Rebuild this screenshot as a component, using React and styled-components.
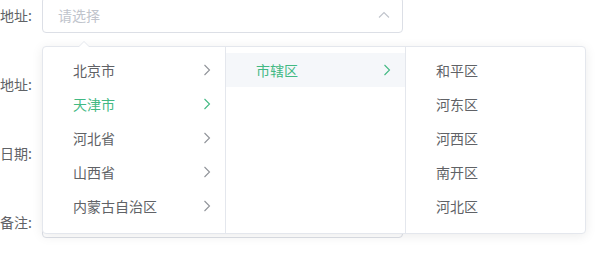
import React from 'react';
import styled, { createGlobalStyle } from 'styled-components';

const GlobalStyle = createGlobalStyle`
  html, body {
    margin: 0;
    padding: 0;
    background: #fff;
    overflow: hidden;
  }
  body {
    font-family: "Noto Sans CJK SC", "Liberation Sans", sans-serif;
    font-size: 14px;
    color: #606266;
  }
`;

const Page = styled.div`
  position: relative;
  width: 606px;
  height: 257px;
  overflow: hidden;
`;

const Form = styled.div`
  display: flex;
  flex-direction: column;
  gap: 33px;
  margin-top: -3px;
`;

const Row = styled.div`
  display: flex;
  align-items: flex-start;
`;

const Label = styled.div`
  width: 42px;
  flex: none;
  height: 36px;
  padding-right: 10px;
  box-sizing: border-box;
  display: flex;
  align-items: center;
  justify-content: flex-end;
  white-space: nowrap;
  color: #606266;
`;

const Field = styled.div`
  width: 361px;
  height: ${p => p.$h || 36}px;
  box-sizing: border-box;
  border: 1px solid ${p => (p.$active ? '#dcdfe6' : '#dcdfe6')};
  border-radius: 4px;
  display: flex;
  align-items: center;
  justify-content: space-between;
  padding: 0 12px 0 15px;
  background: #fff;
`;

const Placeholder = styled.span`
  color: #c0c4cc;
`;

const Popover = styled.div`
  position: absolute;
  left: 42px;
  top: 46px;
  display: flex;
  background: #fff;
  border: 1px solid #e4e7ed;
  border-radius: 4px;
  box-shadow: 0 2px 12px rgba(0, 0, 0, 0.08);

  &::before {
    content: '';
    position: absolute;
    top: -6px;
    left: 35px;
    border: 6px solid transparent;
    border-top-width: 0;
    border-bottom-color: #e4e7ed;
  }
  &::after {
    content: '';
    position: absolute;
    top: -5px;
    left: 35px;
    border: 6px solid transparent;
    border-top-width: 0;
    border-bottom-color: #fff;
  }
`;

const Menu = styled.ul`
  list-style: none;
  margin: 0;
  padding: 6px 0;
  width: ${p => p.$w}px;
  height: 186px;
  box-sizing: border-box;
  border-right: ${p => (p.$last ? 'none' : '1px solid #e4e7ed')};
`;

const Item = styled.li`
  height: 34px;
  display: flex;
  align-items: center;
  justify-content: space-between;
  padding: 0 14px 0 30px;
  color: ${p => (p.$active ? '#42b983' : '#606266')};
  background: ${p => (p.$hover ? '#f5f7fa' : 'transparent')};
`;

const Chevron = ({ color = '#909399', dir = 'right' }) => (
  <svg width="8" height="12" viewBox="0 0 8 12">
    {dir === 'right' ? (
      <polyline points="1.5,1 6.5,6 1.5,11" fill="none" stroke={color} strokeWidth="1.1" />
    ) : (
      <polyline points="1,6 6,1 11,6" fill="none" stroke={color} strokeWidth="1.1" />
    )}
  </svg>
);

const UpArrow = () => (
  <svg width="12" height="8" viewBox="0 0 12 8">
    <polyline points="1,6.5 6,1.5 11,6.5" fill="none" stroke="#c0c4cc" strokeWidth="1.1" />
  </svg>
);

const provinces = ['北京市', '天津市', '河北省', '山西省', '内蒙古自治区'];
const districts = ['和平区', '河东区', '河西区', '南开区', '河北区'];

export default function App() {
  return (
    <Page>
      <GlobalStyle />
      <Form>
        <Row>
          <Label>地址:</Label>
          <Field>
            <Placeholder>请选择</Placeholder>
            <UpArrow />
          </Field>
        </Row>
        <Row>
          <Label>地址:</Label>
          <Field />
        </Row>
        <Row>
          <Label>日期:</Label>
          <Field />
        </Row>
        <Row>
          <Label>备注:</Label>
          <Field $h={34} />
        </Row>
      </Form>

      <Popover>
        <Menu $w={183}>
          {provinces.map(name => (
            <Item key={name} $active={name === '天津市'}>
              <span>{name}</span>
              <Chevron color={name === '天津市' ? '#42b983' : '#909399'} />
            </Item>
          ))}
        </Menu>
        <Menu $w={180}>
          <Item $active $hover>
            <span>市辖区</span>
            <Chevron color="#42b983" />
          </Item>
        </Menu>
        <Menu $w={179} $last>
          {districts.map(name => (
            <Item key={name}>
              <span>{name}</span>
            </Item>
          ))}
        </Menu>
      </Popover>
    </Page>
  );
}
